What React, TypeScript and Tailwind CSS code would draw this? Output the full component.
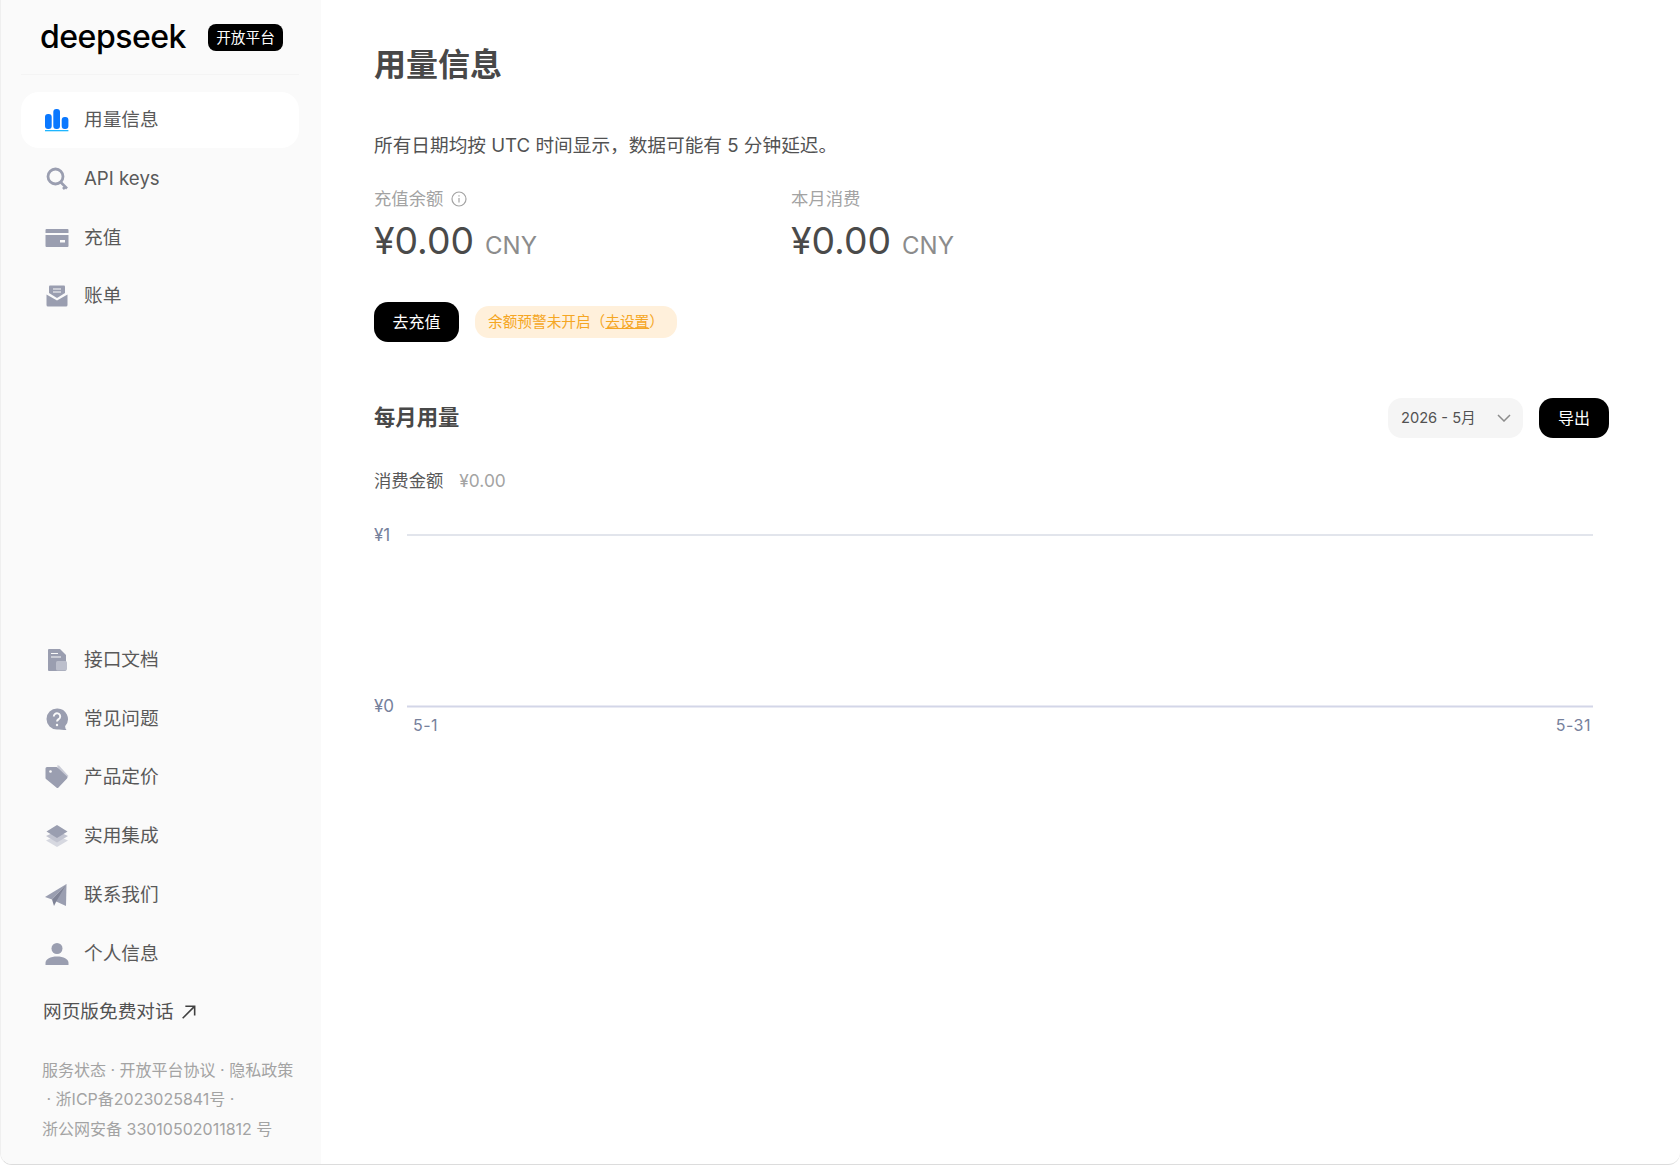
import type { ReactNode } from 'react';

const FONT = 'font-["Inter","Noto_Sans_CJK_SC",sans-serif]';

function BarsIcon() {
    return (
        <svg width="24" height="24" viewBox="0 0 24 24">
            <rect x="0" y="6" width="6.700" height="15" rx="3" fill="#0a78ff" />
            <rect x="8.300" y="1" width="6.700" height="20" rx="3" fill="#0a78ff" />
            <rect x="16.700" y="9" width="6.700" height="12" rx="3" fill="#0a78ff" />
            <rect x="0" y="22" width="23.400" height="1.300" fill="#1fb6ff" />
        </svg>
    );
}

function KeyIcon() {
    return (
        <svg width="24" height="24" viewBox="0 0 24 24" fill="none" stroke="#9a9eb0">
            <circle cx="10.500" cy="9.500" r="7.500" strokeWidth="2.800" />
            <path d="M15.500 15l6.500 6.500M18 22l2.500-2.500" strokeWidth="2.600" />
        </svg>
    );
}

function CardIcon() {
    return (
        <svg width="24" height="24" viewBox="0 0 24 24">
            <path d="M1.5 3h21a1 1 0 011 1v3H.5V4a1 1 0 011-1z" fill="#9a9eb0" />
            <path d="M.5 9h23v11a1 1 0 01-1 1h-21a1 1 0 01-1-1z" fill="#9a9eb0" />
            <rect x="15" y="14" width="5" height="2.5" fill="#fafafa" />
        </svg>
    );
}

function MailIcon() {
    return (
        <svg width="24" height="24" viewBox="0 0 24 24">
            <path d="M5 1.5h14a1 1 0 011 1V9l-8 5-8-5V2.500a1 1 0 011-1z" fill="#9a9eb0" />
            <path d="M8 5h8M8 8h8" stroke="#fafafa" strokeWidth="1.2" />
            <path d="M1.500 10.500L12 16.500l10.500-6V21a1.500 1.500 0 01-1.500 1.500H3A1.500 1.500 0 011.500 21z" fill="#9a9eb0" />
        </svg>
    );
}

function DocIcon() {
    return (
        <svg width="24" height="24" viewBox="0 0 24 24">
            <path d="M4 1h11l6 6v15a1 1 0 01-1 1H4a1 1 0 01-1-1V2a1 1 0 011-1z" fill="#9a9eb0" />
            <path d="M6 5.500h7M6 9h10" stroke="#fafafa" strokeWidth="1.2" />
            <rect x="11" y="13" width="11" height="9.500" rx="1.500" fill="#bcbfcc" />
        </svg>
    );
}

function HelpIcon() {
    return (
        <svg width="24" height="24" viewBox="0 0 24 24">
            <path d="M12 1.500a10.500 10.500 0 100 21c2.500 0 6 .5 9.500.5-1-1.200-1.500-2.500-1.300-4A10.500 10.500 0 0012 1.500z" fill="#9a9eb0" />
            <path d="M8.800 9.500a3.200 3.200 0 116 1.500c-.8 1.200-2.800 1.700-2.800 3.500" fill="none" stroke="#fafafa" strokeWidth="1.900" />
            <circle cx="12" cy="18" r="1.200" fill="#fafafa" />
        </svg>
    );
}

function TagIcon() {
    return (
        <svg width="24" height="24" viewBox="0 0 24 24">
            <path d="M12 .5h2l9.500 10.500-5 5z" fill="#c9cbd6" />
            <path d="M2 1.500h9.500a1.500 1.500 0 011 .5l9.500 9a1.400 1.400 0 010 2l-8.500 9a1.500 1.500 0 01-2.100 0L1 13.500a1.500 1.500 0 01-.5-1V3A1.500 1.500 0 012 1.500z" fill="#9a9eb0" transform="translate(0 .5)" />
            <circle cx="5.500" cy="6.500" r="1.300" fill="#fafafa" />
        </svg>
    );
}

function LayersIcon() {
    return (
        <svg width="24" height="24" viewBox="0 0 24 24">
            <path d="M1 16.500l11-5 11 5-11 6.500z" fill="#d6d8e0" />
            <path d="M1 12l11-5 11 5-11 6.500z" fill="#c2c4d0" />
            <path d="M1.500 7.500L12 1l10.500 6.500L12 14z" fill="#9a9eb0" />
        </svg>
    );
}

function PlaneIcon() {
    return (
        <svg width="24" height="24" viewBox="0 0 24 24">
            <path d="M21.500 1L0 14l7 2.500z" fill="#9a9eb0" />
            <path d="M21.500 1L9 17.500 21 23z" fill="#9a9eb0" />
            <path d="M21.500 1L7 16.500l2 6.500 2.500-5z" fill="#7f8396" />
        </svg>
    );
}

function UserIcon() {
    return (
        <svg width="24" height="24" viewBox="0 0 24 24">
            <circle cx="12" cy="6.500" r="5.500" fill="#9a9eb0" />
            <path d="M.5 23v-2c0-4 5-6.500 11.500-6.500S23.500 17 23.500 21v2z" fill="#9a9eb0" />
        </svg>
    );
}

function InfoIcon() {
    return (
        <svg width="16" height="16" viewBox="0 0 16 16" fill="none" stroke="#a3a3a3" strokeWidth="1.200">
            <circle cx="8" cy="8" r="7" />
            <path d="M8 7v4.500" />
            <path d="M8 4.200v1.300" />
        </svg>
    );
}

function NavItem({ icon, label, active = false }: { icon: ReactNode; label: string; active?: boolean }) {
    return (
        <div className={`flex items-center h-[56px] mb-[2.8px] pl-[24px] rounded-[18px] ${active ? 'bg-white' : ''}`}>
            <span className="w-[24px] h-[24px] shrink-0">{icon}</span>
            <span className="ml-[15px] text-[18.67px] text-[#595959]">{label}</span>
        </div>
    );
}

function Balance({ label, info = false }: { label: string; info?: boolean }) {
    return (
        <div className="w-[417px]">
            <div className="flex items-center h-[24px] text-[17.33px] text-[#a3a3a3]">
                {label}
                {info && (
                    <span className="ml-[8px] flex">
                        <InfoIcon />
                    </span>
                )}
            </div>
            <div className="mt-[5px] flex items-baseline h-[50px] text-[#4a4a4a]">
                <span className="text-[37.33px] leading-[50px]">¥0.00</span>
                <span className="ml-[11px] text-[24px] text-[#8c8c8c]">CNY</span>
            </div>
        </div>
    );
}

function UsageChart() {
    return (
        <svg width="1235" height="230" viewBox="0 0 1235 230" className="block mt-[25px]">
            <line x1="33" y1="17" x2="1219" y2="17" stroke="#d8dce6" strokeWidth="1.500" />
            <line x1="33" y1="188.500" x2="1219" y2="188.500" stroke="#d3d6e8" strokeWidth="2" />
            <g fill="#76819c" fontFamily="Inter, sans-serif">
                <text x="0" y="23" fontSize="17">¥1</text>
                <text x="0" y="194" fontSize="17">¥0</text>
                <text x="39" y="213" fontSize="16" letterSpacing="0.5">5-1</text>
                <text x="1217" y="213" fontSize="16" textAnchor="end" letterSpacing="0.5">5-31</text>
            </g>
        </svg>
    );
}

export default function App() {
    return (
        <div className={`${FONT} flex h-[1165px] w-[1680px] overflow-hidden bg-white rounded-b-[12px] border-b border-b-[#dcdcdc] border-l border-l-[#efefef]`}>
            {/* Sidebar */}
            <aside className="flex flex-col w-[320px] shrink-0 h-full bg-[#fafafa]">
                <div className="ml-[20px] mr-[22px] h-[75px] shrink-0 border-b border-[#f4f4f4] flex items-start pt-[19px]">
                    <span className="ml-[19px] w-[149px] text-[32px] leading-[36px] font-medium tracking-[-0.5px] text-black">deepseek</span>
                    <span className="ml-[19px] mt-[5px] w-[75px] h-[27px] rounded-[8px] bg-black text-white text-[14.67px] flex items-center justify-center">开放平台</span>
                </div>

                <nav className="mt-[17px] ml-[20px] mr-[22px]">
                    <NavItem icon={<BarsIcon />} label="用量信息" active />
                    <NavItem icon={<KeyIcon />} label="API keys" />
                    <NavItem icon={<CardIcon />} label="充值" />
                    <NavItem icon={<MailIcon />} label="账单" />
                </nav>

                <div className="mt-auto ml-[20px] mr-[22px]">
                    <NavItem icon={<DocIcon />} label="接口文档" />
                    <NavItem icon={<HelpIcon />} label="常见问题" />
                    <NavItem icon={<TagIcon />} label="产品定价" />
                    <NavItem icon={<LayersIcon />} label="实用集成" />
                    <NavItem icon={<PlaneIcon />} label="联系我们" />
                    <NavItem icon={<UserIcon />} label="个人信息" />
                </div>

                <div className="flex items-center h-[54px] ml-[42px] text-[18.67px] text-[#525252]">
                    网页版免费对话
                    <svg width="16" height="16" viewBox="0 0 18 18" fill="none" stroke="#404040" strokeWidth="1.800" className="ml-[6px]">
                        <path d="M3 16L16 3M6 2.500h10.500V13" />
                    </svg>
                </div>

                <div className="mt-[17px] ml-[41px] mb-[20px] w-[262px] text-[16px] leading-[29.500px] text-[#a3a3a3]">
                    <div>服务状态 · 开放平台协议 · 隐私政策</div>
                    <div>&nbsp;· 浙ICP备2023025841号 ·</div>
                    <div>浙公网安备 33010502011812 号</div>
                </div>
            </aside>

            {/* Main */}
            <main className="flex-1 pl-[53px] pr-[71px]">
                <h1 className="mt-[44px] text-[32px] leading-[42px] font-bold text-[#484848]">用量信息</h1>

                <p className="mt-[48px] text-[18.67px] leading-[24px] text-[#525252]">{'所有日期均按 UTC 时间显示\uFF0C数据可能有 5 分钟延迟。'}</p>

                <div className="mt-[29px] flex">
                    <Balance label="充值余额" info />
                    <Balance label="本月消费" />
                </div>

                <div className="mt-[36px] flex items-center">
                    <button className="w-[85px] h-[40px] rounded-[14px] bg-black text-white text-[16px]">去充值</button>
                    <div className="ml-[16px] w-[202px] h-[32px] rounded-[14px] bg-[#fff0db] text-[#f5a623] text-[14.67px] flex items-center pl-[13px]">
                        {'余额预警未开启\uFF08'}<span className="underline">去设置</span>{'\uFF09'}
                    </div>
                </div>

                <div className="mt-[56px] flex items-center h-[40px]">
                    <h2 className="text-[21.33px] font-bold text-[#484848]">每月用量</h2>
                    <div className="ml-auto flex items-center justify-between w-[135px] h-[40px] pl-[13px] pr-[12px] rounded-[14px] bg-[#f5f5f5] text-[14.67px] text-[#525252]">
                        2026 - 5月
                        <svg width="14" height="8" viewBox="0 0 14 8" fill="none" stroke="#8c8c8c" strokeWidth="1.500">
                            <path d="M1 1l6 6 6-6" />
                        </svg>
                    </div>
                    <button className="ml-[16px] w-[70px] h-[40px] rounded-[14px] bg-black text-white text-[16px]">导出</button>
                </div>

                <div className="mt-[31px] flex items-center h-[24px] text-[17.33px] text-[#595959]">
                    消费金额
                    <span className="ml-[16px] text-[#a3a3a3]">¥0.00</span>
                </div>

                <UsageChart />
            </main>
        </div>
    );
}
